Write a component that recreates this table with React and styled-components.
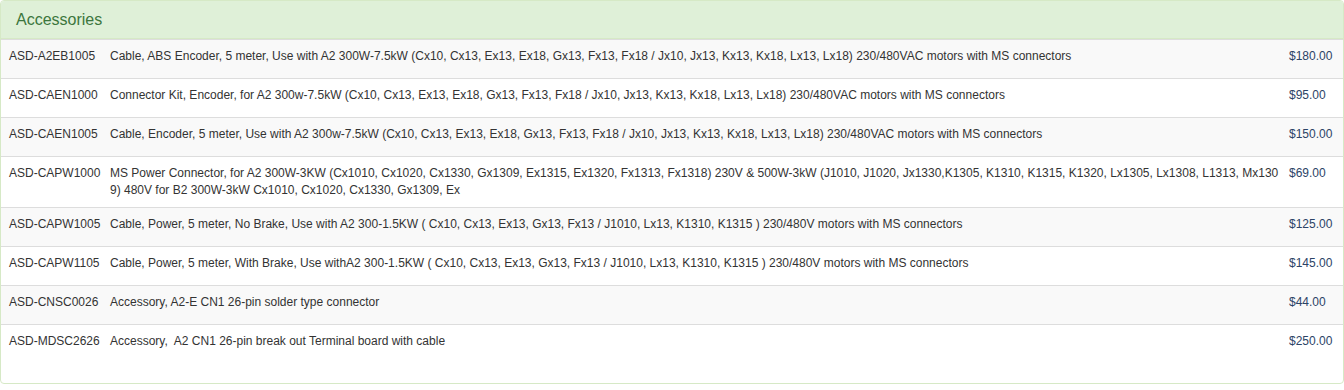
import React from "react";
import styled, { createGlobalStyle } from "styled-components";

const Global = createGlobalStyle`
  html, body { margin: 0; padding: 0; background: #fff; }
  body { font-family: "Liberation Sans", Arial, sans-serif; font-size: 12px; color: #333; }
`;

const Panel = styled.section`
  width: 1344px;
  box-sizing: border-box;
  border: 1px solid #d6e9c6;
  border-radius: 4px;
  background: #fff;
  overflow: hidden;
`;

const Heading = styled.div`
  background: #dff0d8;
  border-bottom: 1px solid #d6e9c6;
  padding: 10px 15px;
  height: 17px;
`;

const Title = styled.h3`
  margin: 0;
  font-size: 16px;
  line-height: 17px;
  font-weight: 400;
  color: #3c763d;
`;

const Table = styled.div`
  padding-bottom: 20px;
`;

const Row = styled.div`
  display: grid;
  grid-template-columns: 93px 1171px 1fr;
  column-gap: 8px;
  padding: 8px;
  border-top: 1px solid #ddd;
  background: ${(p) => (p.$striped ? "#f9f9f9" : "#fff")};
  line-height: 17px;
  min-height: 22px;
`;

const Code = styled.div`
  white-space: nowrap;
`;

const Desc = styled.div`
  word-break: break-all;
`;

const Price = styled.div`
  color: #2c4366;
`;

const items = [
  ["ASD-A2EB1005", "Cable, ABS Encoder, 5 meter, Use with A2 300W-7.5kW (Cx10, Cx13, Ex13, Ex18, Gx13, Fx13, Fx18 / Jx10, Jx13, Kx13, Kx18, Lx13, Lx18) 230/480VAC motors with MS connectors", "$180.00"],
  ["ASD-CAEN1000", "Connector Kit, Encoder, for A2 300w-7.5kW (Cx10, Cx13, Ex13, Ex18, Gx13, Fx13, Fx18 / Jx10, Jx13, Kx13, Kx18, Lx13, Lx18) 230/480VAC motors with MS connectors", "$95.00"],
  ["ASD-CAEN1005", "Cable, Encoder, 5 meter, Use with A2 300w-7.5kW (Cx10, Cx13, Ex13, Ex18, Gx13, Fx13, Fx18 / Jx10, Jx13, Kx13, Kx18, Lx13, Lx18) 230/480VAC motors with MS connectors", "$150.00"],
  ["ASD-CAPW1000", "MS Power Connector, for A2 300W-3KW (Cx1010, Cx1020, Cx1330, Gx1309, Ex1315, Ex1320, Fx1313, Fx1318) 230V & 500W-3kW (J1010, J1020, Jx1330,K1305, K1310, K1315, K1320, Lx1305, Lx1308, L1313, Mx1309) 480V for B2 300W-3kW Cx1010, Cx1020, Cx1330, Gx1309, Ex", "$69.00"],
  ["ASD-CAPW1005", "Cable, Power, 5 meter, No Brake, Use with A2 300-1.5KW ( Cx10, Cx13, Ex13, Gx13, Fx13 / J1010, Lx13, K1310, K1315 ) 230/480V motors with MS connectors", "$125.00"],
  ["ASD-CAPW1105", "Cable, Power, 5 meter, With Brake, Use withA2 300-1.5KW ( Cx10, Cx13, Ex13, Gx13, Fx13 / J1010, Lx13, K1310, K1315 ) 230/480V motors with MS connectors", "$145.00"],
  ["ASD-CNSC0026", "Accessory, A2-E CN1 26-pin solder type connector", "$44.00"],
  ["ASD-MDSC2626", "Accessory,\u00a0 A2 CN1 26-pin break out Terminal board with cable", "$250.00"],
];

export default function App() {
  return (
    <>
      <Global />
      <Panel>
        <Heading>
          <Title>Accessories</Title>
        </Heading>
        <Table>
          {items.map(([code, desc, price], i) => (
            <Row key={code} $striped={i % 2 === 0}>
              <Code>{code}</Code>
              <Desc>{desc}</Desc>
              <Price>{price}</Price>
            </Row>
          ))}
        </Table>
      </Panel>
    </>
  );
}
